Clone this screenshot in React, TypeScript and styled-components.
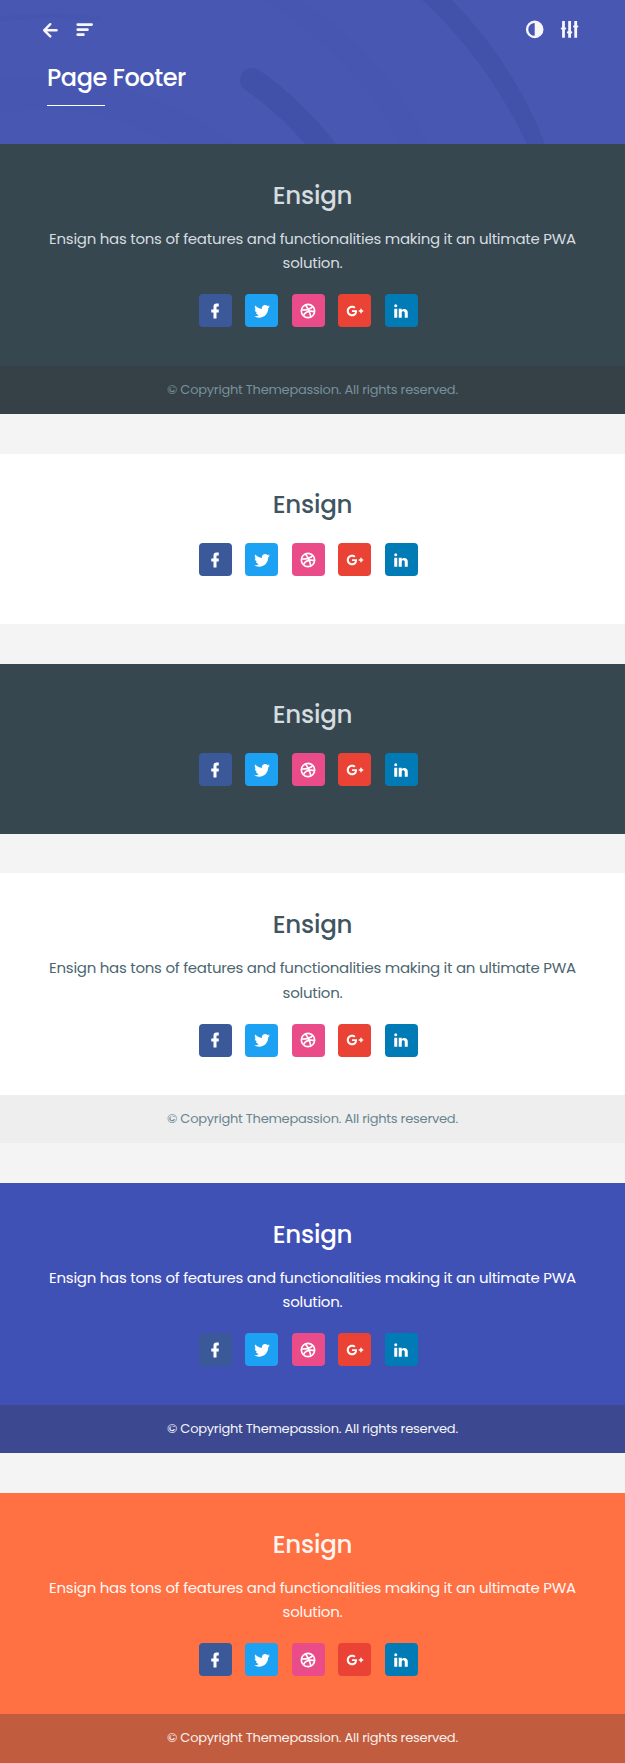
import React from "react";
import styled, { createGlobalStyle } from "styled-components";

const Global = createGlobalStyle`
  * { box-sizing: border-box; }
  body {
    margin: 0;
    background: #f4f4f4;
    font-family: Poppins, Inter, "Liberation Sans", sans-serif;
    font-feature-settings: "cv11";
  }
  h1, h2, p { margin: 0; }
`;

const Page = styled.div`
  display: flex;
  flex-direction: column;
  gap: 39.8px;
`;

const Top = styled.div`
  display: flex;
  flex-direction: column;
`;

const Header = styled.header`
  position: relative;
  height: 144px;
  overflow: hidden;
  background: #4858b2;
  color: #fff;
`;

const Waves = styled.svg`
  position: absolute;
  inset: 0;
`;

const Bar = styled.div`
  position: relative;
  display: flex;
  justify-content: space-between;
  padding: 18px 44px 0 39px;
`;

const Actions = styled.div`
  display: flex;
  gap: 11px;
`;

const IconButton = styled.button`
  width: 24px;
  height: 24px;
  padding: 0;
  border: 0;
  background: none;
  color: #f6f6fc;
  svg { display: block; }
`;

const PageTitle = styled.h1`
  position: relative;
  width: fit-content;
  padding: 21px 0 0 47px;
  font-size: 24px;
  line-height: 30px;
  font-weight: 500;
  letter-spacing: -0.46px;
  &::after {
    content: "";
    display: block;
    width: 58px;
    height: 1px;
    margin-top: 12px;
    background: #fff;
  }
`;

type Tone = { bg: string; title: string; text: string; bar?: string; barText?: string };

const Footer = styled.footer<{ $tone: Tone }>`
  background: ${(p) => p.$tone.bg};
  color: ${(p) => p.$tone.text};
  text-align: center;
`;

const Content = styled.div<{ $full: boolean }>`
  height: ${(p) => (p.$full ? 221.5 : 170)}px;
  padding-top: 35.6px;
`;

const Brand = styled.h2<{ $color: string }>`
  color: ${(p) => p.$color};
  font-size: 24.6px;
  line-height: 32px;
  font-weight: 500;
  letter-spacing: -0.25px;
`;

const Blurb = styled.p`
  margin-top: 15.4px;
  font-size: 15px;
  line-height: 24.2px;
  letter-spacing: -0.27px;
  white-space: pre-line;
`;

const Socials = styled.div<{ $full: boolean }>`
  display: flex;
  justify-content: center;
  gap: 13.5px;
  margin-top: ${(p) => (p.$full ? 18.8 : 21.9)}px;
  padding-right: 8.4px;
`;

const Social = styled.a<{ $color: string }>`
  display: grid;
  place-items: center;
  width: 33px;
  height: 33px;
  border-radius: 4px;
  background: ${(p) => p.$color};
  color: #fff;
`;

const Copyright = styled.p<{ $tone: Tone }>`
  height: 48.5px;
  line-height: 48.5px;
  font-size: 13px;
  letter-spacing: -0.24px;
  background: ${(p) => p.$tone.bar};
  color: ${(p) => p.$tone.barText};
`;

const networks = [
  {
    name: "Facebook",
    color: "#3b5998",
    path: "M17,2V6H15C14.31,6 14,6.81 14,7.5V10H17V14H14V22H10V14H7V10H10V6A4,4 0 0,1 14,2H17Z",
  },
  {
    name: "Twitter",
    color: "#1da1f2",
    path: "M22.46,6C21.69,6.35 20.86,6.58 20,6.69C20.88,6.16 21.56,5.32 21.88,4.31C21.05,4.81 20.13,5.16 19.16,5.36C18.37,4.5 17.26,4 16,4C13.65,4 11.73,5.92 11.73,8.29C11.73,8.63 11.77,8.96 11.84,9.27C8.28,9.09 5.11,7.38 3,4.79C2.63,5.42 2.42,6.16 2.42,6.94C2.42,8.43 3.17,9.75 4.33,10.5C3.62,10.5 2.96,10.3 2.38,10V10.03C2.38,12.11 3.86,13.85 5.82,14.24C5.46,14.34 5.08,14.39 4.69,14.39C4.42,14.39 4.15,14.36 3.89,14.31C4.43,16 6,17.26 7.89,17.29C6.43,18.45 4.58,19.13 2.56,19.13C2.22,19.13 1.88,19.11 1.54,19.07C3.44,20.29 5.7,21 8.12,21C16,21 20.33,14.46 20.33,8.79C20.33,8.6 20.33,8.42 20.32,8.23C21.16,7.63 21.88,6.87 22.46,6Z",
  },
  { name: "Dribbble", color: "#ea4c89", path: "" },
  {
    name: "Google Plus",
    color: "#ea4335",
    path: "M23,11H21V9H19V11H17V13H19V15H21V13H23M8,11V13.4H12C11.8,14.4 10.8,16.4 8,16.4C5.6,16.4 3.7,14.4 3.7,12C3.7,9.6 5.6,7.6 8,7.6C9.4,7.6 10.3,8.2 10.8,8.7L12.7,6.9C11.5,5.7 9.9,5 8,5C4.1,5 1,8.1 1,12C1,15.9 4.1,19 8,19C12,19 14.7,16.2 14.7,12.2C14.7,11.7 14.7,11.4 14.6,11H8Z",
  },
  {
    name: "LinkedIn",
    color: "#007bb6",
    path: "M21,21H17V14.25C17,13.19 15.81,12.31 14.75,12.31C13.69,12.31 13,13.19 13,14.25V21H9V9H13V11C13.66,9.93 15.36,9.24 16.5,9.24C19,9.24 21,11.28 21,13.75V21M7,21H3V9H7V21M5,3A2,2 0 0,1 7,5A2,2 0 0,1 5,7A2,2 0 0,1 3,5A2,2 0 0,1 5,3Z",
  },
];

const SocialIcon = ({ path }: { path: string }) => (
  <svg width="18" height="18" viewBox="0 0 24 24" fill="currentColor">
    {path ? (
      <path d={path} />
    ) : (
      <g fill="none" stroke="currentColor" strokeWidth="2.2">
        <circle cx="12" cy="12" r="8.9" />
        <path d="M8.5 4C12 8 14.5 14 15.8 20M3.2 10.6C10 10.8 15.5 9.3 18.6 5.8M5.8 18.4C8.5 13 14 11.3 20.8 12.8" />
      </g>
    )}
  </svg>
);

const tones: Tone[] = [
  { bg: "#37474f", title: "#d5dde0", text: "#d5dde0", bar: "#364147", barText: "#78909c" },
  { bg: "#ffffff", title: "#405560", text: "#455a64" },
  { bg: "#37474f", title: "#d5dde0", text: "#d5dde0" },
  { bg: "#ffffff", title: "#405560", text: "#4c6670", bar: "#eeeeee", barText: "#68858f" },
  { bg: "#3f51b5", title: "#ffffff", text: "#ffffff", bar: "#3c4990", barText: "#f5f5fa" },
  { bg: "#ff7043", title: "#fff5f1", text: "#fff8f5", bar: "#c25c3f", barText: "#faf0ec" },
];

const FooterBlock = ({ tone }: { tone: Tone }) => {
  const full = Boolean(tone.bar);
  return (
    <Footer $tone={tone}>
      <Content $full={full}>
        <Brand $color={tone.title}>Ensign</Brand>
        {full && (
          <Blurb>
            {"Ensign has tons of features and functionalities making it an ultimate PWA\nsolution."}
          </Blurb>
        )}
        <Socials $full={full}>
          {networks.map((n) => (
            <Social key={n.name} $color={n.color} aria-label={n.name}>
              <SocialIcon path={n.path} />
            </Social>
          ))}
        </Socials>
      </Content>
      {full && <Copyright $tone={tone}>© Copyright Themepassion. All rights reserved.</Copyright>}
    </Footer>
  );
};

export default function App() {
  return (
    <>
      <Global />
      <Page>
        <Top>
          <Header>
            <Waves width="625" height="144" viewBox="0 0 625 144" fill="none">
              <path d="M252 80Q292 107 327 152" stroke="#4150a9" strokeWidth="24" strokeLinecap="round" />
              <path d="M422 0H452Q514 64 545 144H527Q486 58 422 0Z" fill="#4252ab" />
              <path d="M262 0H302Q390 60 428 144H400Q350 50 262 0Z" fill="#4555b0" opacity=".4" />
              <path d="M0 19Q50 13 100 19" stroke="#4353ac" strokeWidth="5" opacity=".4" />
              <path d="M0 79Q130 66 235 144H170Q90 98 0 113Z" fill="#4353ac" opacity=".22" />
            </Waves>
            <Bar>
              <Actions>
                <IconButton aria-label="Back">
                  <svg width="24" height="24" fill="none" stroke="currentColor" strokeWidth="2.4" strokeLinecap="round" strokeLinejoin="round">
                    <path d="M17.6 12.3H5.2M11.3 6.2L5.2 12.3L11.3 18.4" />
                  </svg>
                </IconButton>
                <IconButton aria-label="Menu">
                  <svg width="24" height="24" fill="none" stroke="currentColor" strokeWidth="2.8" strokeLinecap="round">
                    <path d="M3.8 6.6H17.6M3.8 11.7H13.4M3.8 16.7H9.4" />
                  </svg>
                </IconButton>
              </Actions>
              <Actions>
                <IconButton aria-label="Contrast">
                  <svg width="24" height="24" fill="currentColor">
                    <path fillRule="evenodd" d="M12.7 2.6a8.8 8.8 0 1 0 0 17.6a8.8 8.8 0 0 0 0-17.6ZM12.7 5V17.8a6.4 6.4 0 0 1 0-12.8Z" />
                  </svg>
                </IconButton>
                <IconButton aria-label="Settings">
                  <svg width="24" height="24" fill="none" stroke="currentColor" strokeWidth="2.8">
                    <path d="M6.5 3V19.7M12.6 3V19.7M18.7 3V19.7" />
                    <path strokeLinecap="round" strokeWidth="2.2" d="M4.9 10.5H8.1M11 14.4H14.2M17.1 8.5H20.3" />
                  </svg>
                </IconButton>
              </Actions>
            </Bar>
            <PageTitle>Page Footer</PageTitle>
          </Header>
          <FooterBlock tone={tones[0]} />
        </Top>
        {tones.slice(1).map((tone, i) => (
          <FooterBlock key={i} tone={tone} />
        ))}
      </Page>
    </>
  );
}
